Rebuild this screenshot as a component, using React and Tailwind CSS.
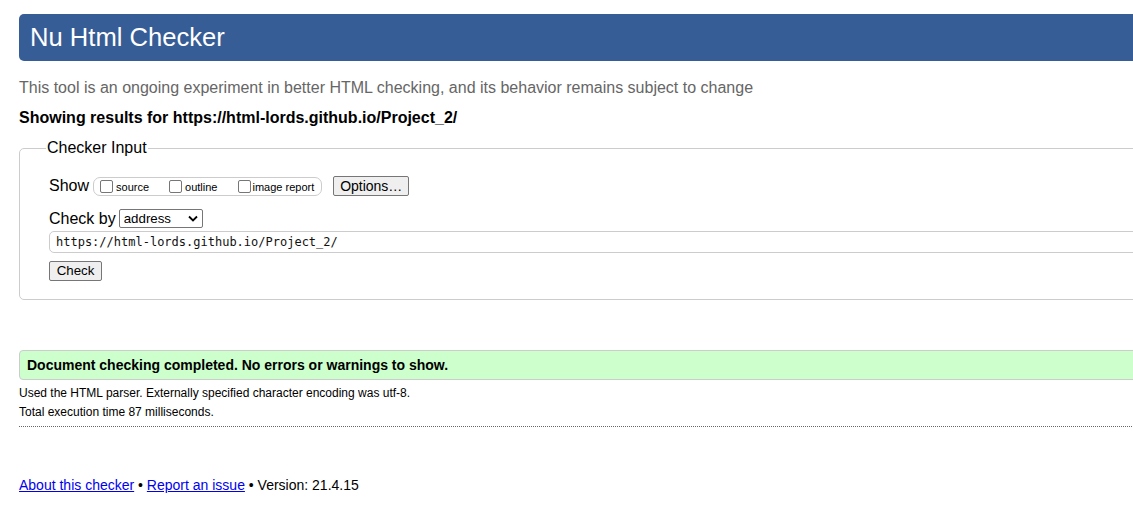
export default function App() {
  return (
    <div className="w-[1133px] h-[532px] overflow-hidden bg-white font-['Liberation_Sans',Arial,sans-serif] text-black">
      <div className="w-[1300px] pl-[19px] pt-[14px]">
        {/* header */}
        <h1 className="h-[47px] bg-[#365d95] rounded-[5px] pl-[11px] flex items-center text-white text-[25.6px] leading-none">
          Nu Html Checker
        </h1>

        <p className="mt-[17px] text-[16px] text-[#666] leading-[20px]">
          This tool is an ongoing experiment in better HTML checking, and its behavior remains subject to change
        </p>
        <p className="mt-[10px] text-[16px] font-bold leading-[20px]">
          Showing results for https://html-lords.github.io/Project_2/
        </p>

        {/* checker input */}
        <fieldset className="mt-[11px] border border-[#ccc] rounded-tl-[5px] rounded-bl-[5px] pl-[29px] pb-[17px]">
          <legend className="-ml-[3px] px-[1px] text-[16px] leading-[18px]">Checker Input</legend>

          <div className="mt-[19px] flex items-center h-[20px]">
            <span className="text-[16px] mr-[4px]">Show</span>
            <div className="flex items-center h-[19px] border border-[#ccc] rounded-[7px] pl-[6px] pr-[7px] text-[11px]">
              <label className="flex items-center mr-[20px]">
                <span className="w-[13px] h-[13px] border border-[#767676] rounded-[2px] bg-white mr-[3px]" />
                <span className="mt-[2px]">source</span>
              </label>
              <label className="flex items-center mr-[21px]">
                <span className="w-[13px] h-[13px] border border-[#767676] rounded-[2px] bg-white mr-[3px]" />
                <span className="mt-[2px]">outline</span>
              </label>
              <label className="flex items-center">
                <span className="w-[13px] h-[13px] border border-[#767676] rounded-[2px] bg-white mr-[1px]" />
                <span className="mt-[2px]">image report</span>
              </label>
            </div>
            <button className="ml-[11px] h-[20px] w-[76px] border border-[#767676] rounded-[2px] bg-[#efefef] text-[14px] leading-none">
              Options…
            </button>
          </div>

          <div className="mt-[13px] flex items-center h-[19px]">
            <span className="text-[16px] mr-[3px]">Check by</span>
            <div className="w-[84px] h-[19px] border border-[#767676] rounded-[2px] flex items-center justify-between pl-[4px] pr-[4px] text-[13.3px]">
              <span>address</span>
              <svg width="10" height="7" viewBox="0 0 10 7">
                <path d="M1 1.5 L5 5.5 L9 1.5" stroke="#000" strokeWidth="1.8" fill="none" />
              </svg>
            </div>
          </div>

          <div className="mt-[3px] h-[22px] border border-[#ccc] rounded-l-[5px] flex items-center pl-[6px] font-['DejaVu_Sans_Mono',monospace] text-[12px] text-[#111]">
            https://html-lords.github.io/Project_2/
          </div>

          <button className="mt-[8px] h-[20px] w-[53px] border border-[#767676] rounded-[2px] bg-[#efefef] text-[13.3px] leading-none">
            Check
          </button>
        </fieldset>

        {/* result */}
        <div className="mt-[50px] h-[30px] bg-[#ccffcc] border border-[#ccc] rounded-l-[4px] flex items-center pl-[7px] text-[14px] font-bold">
          Document checking completed. No errors or warnings to show.
        </div>
        <p className="mt-[6px] text-[12px] leading-[14px]">
          Used the HTML parser. Externally specified character encoding was utf-8.
        </p>
        <p className="mt-[5px] text-[12px] leading-[14px]">Total execution time 87 milliseconds.</p>
        <div className="mt-[7px] border-t border-dotted border-[#666]" />

        {/* footer */}
        <p className="mt-[50px] text-[14px] leading-[16px]">
          <a href="#" className="text-[#0000ee] underline">About this checker</a>
          {" • "}
          <a href="#" className="text-[#0000ee] underline">Report an issue</a>
          {" • Version: 21.4.15"}
        </p>
      </div>
    </div>
  );
}
